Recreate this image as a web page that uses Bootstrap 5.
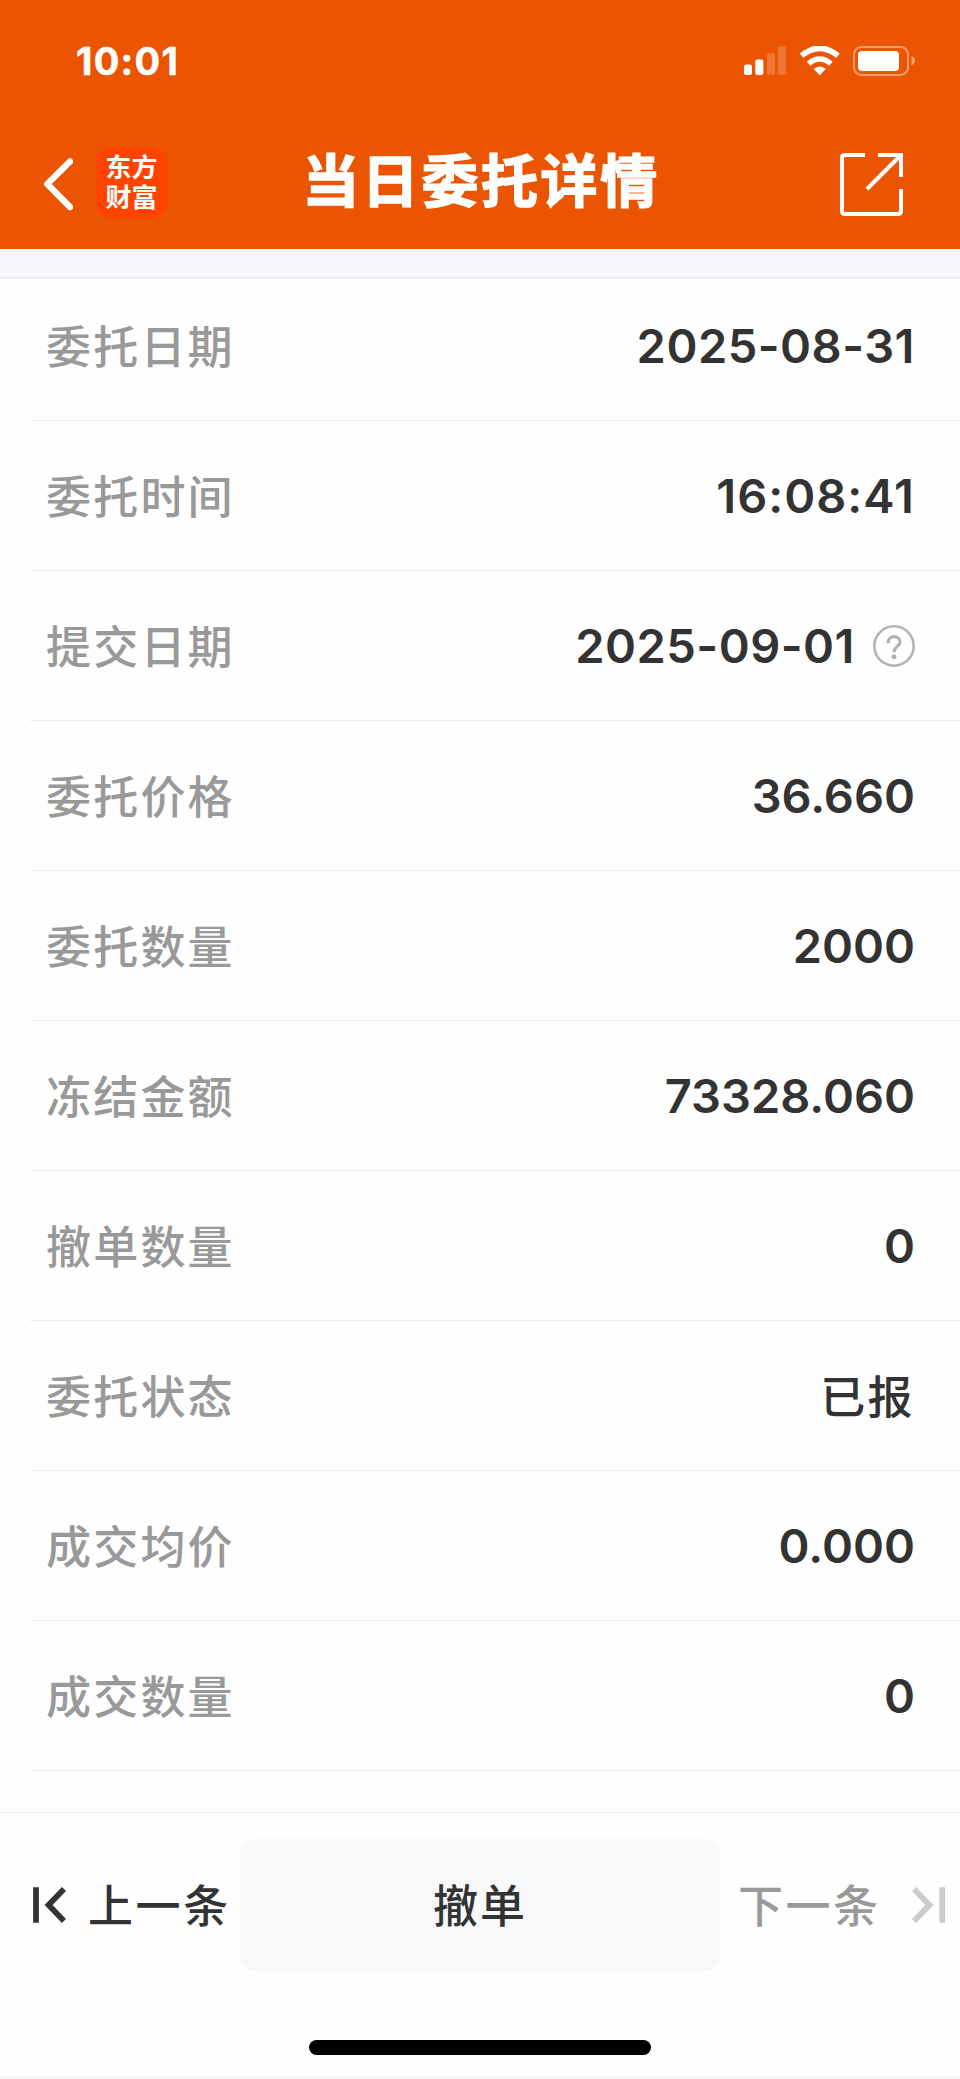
<!DOCTYPE html>
<html lang="zh-CN">
<head>
<meta charset="utf-8">
<meta name="viewport" content="width=device-width, initial-scale=1">
<title>当日委托详情</title>
<link href="https://cdn.jsdelivr.net/npm/bootstrap@5.3.0/dist/css/bootstrap.min.css" rel="stylesheet">
<style>
  body { font-family: Inter, "Noto Sans CJK SC", sans-serif; color: #333; background: #fefefe; }
  svg { display: block; flex: none; }
  .screen { width: 960px; height: 2079px; overflow: hidden; }
  .top-area { height: 249px; background: #eb5502; color: #fff; }
  .status-bar { height: 122px; padding: 0 45px 0 76px; }
  .clock { font-size: 38px; font-weight: 700; line-height: 1; letter-spacing: 1.3px; -webkit-text-stroke: .5px #fff; }
  .title-bar { height: 127px; padding: 0 57px 3px 42px; display: grid; grid-template-columns: 1fr auto 1fr; }
  .page-title { font-size: 57px; font-weight: 700; letter-spacing: 2.6px; line-height: 1; padding: 0 0 5px 17px; -webkit-text-stroke: 1.5px #fff; }
  .logo-tile { width: 71px; height: 71px; margin: 0 0 3px 23px; border-radius: 15px; background: #ff4400; font-size: 26px; line-height: 30px; font-weight: 700; }
  .strip { height: 30px; background: #f5f7fa; border-bottom: 2px solid #ededee; }
  .detail-row { height: 150px; margin-left: 30px; padding: 0 45px 0 16px; border-bottom: 1px solid #ededed; }
  .detail-row:first-child { height: 142px; padding-bottom: 8px; }
  .detail-label { font-size: 45px; font-weight: 500; letter-spacing: 2.2px; color: #999; padding-top: 4px; }
  .detail-value { font-size: 47px; font-weight: 600; padding-top: 1px; }
  .value-date { letter-spacing: .5px; }
  .value-time { letter-spacing: 1px; }
  .value-cn { font-size: 45px; font-weight: 500; letter-spacing: 2.4px; padding-top: 4px; }
  .action-bar { height: 159px; margin-top: 41px; padding-top: 26px; border-top: 1px solid #ededed; font-size: 45px; font-weight: 500; letter-spacing: 2.6px; }
  .action-bar span { display: block; padding-top: 4px; }
  .side-btn { width: 240px; height: 132px; white-space: nowrap; }
  .prev-btn { padding-left: 32px; gap: 22px; }
  .next-btn { padding-left: 18px; gap: 31px; color: #999; }
  .cancel-btn { width: 480px; height: 132px; border-radius: 15px; background: #f7f8fa; color: #333; font-size: 45px; font-weight: 500; letter-spacing: 2px; border: 0; }
  .home-area { height: 105px; padding-top: 69px; }
  .home-bar { width: 342px; height: 15px; background: #000; }
  .end-strip { height: 3px; background: #f5f7fa; }
</style>
</head>
<body>
<div class="screen d-flex flex-column mx-auto">
  <header class="top-area">
    <div class="status-bar d-flex align-items-center justify-content-between">
      <span class="clock">10:01</span>
      <svg width="171" height="30" viewBox="744 46 171 30">
        <g fill="#fff">
          <rect x="744" y="64.5" width="8" height="10.5" rx="2"/>
          <rect x="755.3" y="59.5" width="8" height="15.5" rx="2"/>
          <g opacity=".2"><rect x="767" y="53" width="8" height="22" rx="2"/><rect x="778" y="46.5" width="8" height="28.5" rx="2"/></g>
          <path d="M813.6 69 Q819.7 64 825.8 69 L819.7 75.2Z"/>
          <rect x="858" y="51" width="41" height="20" rx="4"/>
          <path opacity=".45" d="M911.5 56.2 Q915 57.5 915 60.8 Q915 64.1 911.5 65.4Z"/>
        </g>
        <g fill="none" stroke="#fff">
          <path stroke-width="5.6" d="M801.5 55.7 Q819.7 40.9 838 55.7"/>
          <path stroke-width="5.4" d="M808.5 63.6 Q819.7 54.4 831 63.6"/>
          <rect x="854" y="47" width="54" height="28" rx="7.5" stroke-width="2" opacity=".42"/>
        </g>
      </svg>
    </div>
    <nav class="title-bar align-items-center">
      <div class="d-flex align-items-center">
        <svg width="31" height="54" viewBox="42 156 31 54" fill="none" stroke="#fff" stroke-width="6.4" stroke-linecap="round" stroke-linejoin="round"><path d="M70 160.5 47.3 183 70 206"/></svg>
        <div class="logo-tile d-flex flex-column align-items-center justify-content-center"><span>东方</span><span>财富</span></div>
      </div>
      <h1 class="page-title m-0">当日委托详情</h1>
      <svg class="ms-auto" width="63" height="63" viewBox="840 153 63 63" fill="none" stroke="#fff" stroke-width="4">
        <path d="M865 155H845Q842 155 842 158V211Q842 214 845 214H898Q901 214 901 211V189M878 155H901V177M867 189 900 156"/>
      </svg>
    </nav>
  </header>
  <div class="strip"></div>
  <main>
    <div class="detail-row d-flex align-items-center justify-content-between"><span class="detail-label">委托日期</span><span class="detail-value value-date">2025-08-31</span></div>
    <div class="detail-row d-flex align-items-center justify-content-between"><span class="detail-label">委托时间</span><span class="detail-value value-time">16:08:41</span></div>
    <div class="detail-row d-flex align-items-center justify-content-between"><span class="detail-label">提交日期</span>
      <span class="d-flex align-items-center"><span class="detail-value value-date">2025-09-01</span>
        <svg class="ms-3" width="44" height="42" viewBox="-2 0 44 42" fill="none" stroke="#b3b3b3"><circle cx="21" cy="21" r="19.7" stroke-width="2.6"/><path stroke-width="3.2" d="M15.2 18.2C15.2 13.8 17.6 11.6 21 11.6S27 13.8 27 17C27 21.3 21 21.7 21 27.3"/><circle cx="21" cy="31.7" r="2.5" fill="#b3b3b3" stroke="none"/></svg>
      </span></div>
    <div class="detail-row d-flex align-items-center justify-content-between"><span class="detail-label">委托价格</span><span class="detail-value">36.660</span></div>
    <div class="detail-row d-flex align-items-center justify-content-between"><span class="detail-label">委托数量</span><span class="detail-value">2000</span></div>
    <div class="detail-row d-flex align-items-center justify-content-between"><span class="detail-label">冻结金额</span><span class="detail-value">73328.060</span></div>
    <div class="detail-row d-flex align-items-center justify-content-between"><span class="detail-label">撤单数量</span><span class="detail-value">0</span></div>
    <div class="detail-row d-flex align-items-center justify-content-between"><span class="detail-label">委托状态</span><span class="value-cn">已报</span></div>
    <div class="detail-row d-flex align-items-center justify-content-between"><span class="detail-label">成交均价</span><span class="detail-value">0.000</span></div>
    <div class="detail-row d-flex align-items-center justify-content-between"><span class="detail-label">成交数量</span><span class="detail-value">0</span></div>
  </main>
  <footer>
    <div class="action-bar d-flex">
      <div class="side-btn prev-btn d-flex align-items-center">
        <svg width="34" height="36" viewBox="0 0 34 36" fill="none" stroke="#333" stroke-width="5.8"><path d="M4 .3V35.7M32 2 16.6 18 32 34"/></svg>
        <span>上一条</span>
      </div>
      <button class="cancel-btn btn p-0" type="button"><span>撤单</span></button>
      <div class="side-btn next-btn d-flex align-items-center">
        <span>下一条</span>
        <svg width="34" height="36" viewBox="0 0 34 36" fill="none" stroke="#ccc" stroke-width="5.8"><path d="M30.2 .3V35.7M2 2 17.4 18 2 34"/></svg>
      </div>
    </div>
    <div class="home-area"><div class="home-bar rounded-pill mx-auto"></div></div>
    <div class="end-strip"></div>
  </footer>
</div>
<script src="https://cdn.jsdelivr.net/npm/bootstrap@5.3.0/dist/js/bootstrap.bundle.min.js"></script>
</body>
</html>
